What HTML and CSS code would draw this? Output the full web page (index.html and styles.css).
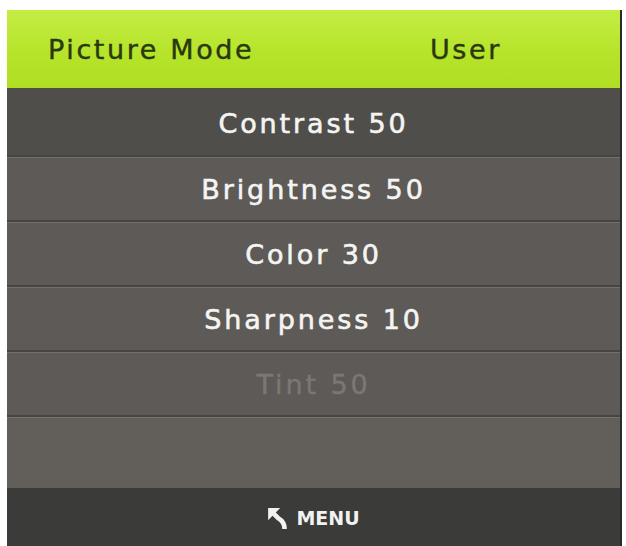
FILE: index.html
```html
<!DOCTYPE html>
<html lang="en">
<head>
    <meta charset="UTF-8">
    <title>Picture Menu</title>
    <link rel="stylesheet" href="styles.css">
</head>
<body>

    <!-- OSD panel -->
    <div class="osd">
        <div class="osd-header">
            <span class="osd-title">Picture Mode</span>
            <span class="osd-value">User</span>
        </div>

        <div class="osd-list">
            <div class="osd-row row-first">Contrast 50</div>
            <div class="osd-row">Brightness 50</div>
            <div class="osd-row">Color 30</div>
            <div class="osd-row">Sharpness 10</div>
            <div class="osd-row row-disabled">Tint 50</div>
            <div class="osd-row row-empty"></div>
        </div>

        <div class="osd-footer">
            <svg class="back-icon" viewBox="0 0 20 20" width="22" height="22">
                <polygon points="1,1 12,1 1,12" fill="#f2f2f2"/>
                <path d="M4 4 L10 10 Q16 13.5 16 20" fill="none" stroke="#f2f2f2" stroke-width="4.2"/>
            </svg>
            <span>MENU</span>
        </div>
    </div>

</body>
</html>
```

FILE: styles.css
```css
/* Estilos gerais */
body {
    margin: 0;
    background-color: #fff;
    font-family: "DejaVu Sans", sans-serif;
}

.osd {
    width: 613px;
    margin: 10px 0 0 7px;
    border-right: 2px solid #2a2a2a;
}

.osd-header {
    height: 78px;
    display: flex;
    align-items: center;
    padding-left: 41px;
    background: linear-gradient(#c4ed44, #b6e42a 55%, #b0de22);
    color: #2a3810;
    font-size: 27px;
    letter-spacing: 2.6px;
    -webkit-text-stroke: 0.4px #2a3810;
}

.osd-title {
    width: 382px;
}

.osd-list {
    background-color: #5d5a57;
}

.osd-row {
    height: 62px;
    display: flex;
    align-items: center;
    justify-content: center;
    color: #f4f4f2;
    font-size: 27px;
    letter-spacing: 2.9px;
    -webkit-text-stroke: 0.6px #f4f4f2;
    border-top: 1px solid #74716d;
    border-bottom: 2px solid #474542;
}

.row-first {
    height: 63px;
    padding-top: 4px;
    border-top: none;
    background-color: #504e4b;
}

.row-disabled {
    color: #7b7874;
    -webkit-text-stroke: 0.4px #7b7874;
}

.row-empty {
    height: 70px;
    border-bottom: none;
    background-color: #625f5b;
}

.osd-footer {
    height: 59px;
    display: flex;
    align-items: center;
    justify-content: center;
    gap: 7px;
    background-color: #3b3b39;
    color: #f2f2f2;
    font-size: 19px;
    font-weight: bold;
}
```
